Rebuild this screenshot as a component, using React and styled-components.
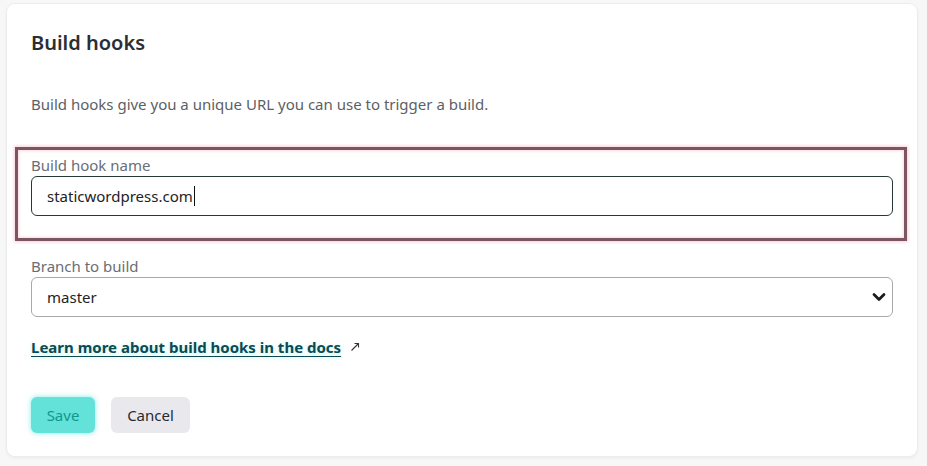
import React from "react";
import styled, { createGlobalStyle } from "styled-components";

const Global = createGlobalStyle`
  html, body { margin: 0; padding: 0; background: #f7f7f7; }
  body { font-family: "Noto Sans", "Open Sans", Arial, sans-serif; color: #2d3035; }
  * { box-sizing: border-box; }
`;

const Page = styled.div`
  padding: 4px 10px 10px 7px;
  width: 927px;
`;

const Card = styled.section`
  width: 910px;
  height: 452px;
  background: #fff;
  border-radius: 8px;
  box-shadow: 0 0 0 1px #ececec, 0 2px 4px rgba(0,0,0,0.06);
  padding: 25px 24px 24px 24px;
  display: flex;
  flex-direction: column;
`;

const Title = styled.h2`
  margin: 0;
  font-size: 20px;
  line-height: 28px;
  font-weight: 600;
  color: #2b2e33;
`;

const Description = styled.p`
  margin: 37px 0 33px;
  font-size: 15px;
  line-height: 20px;
  color: #5b5f66;
`;

const Highlight = styled.div`
  margin: 0 -14px 0 -16px;
  border: 3px solid #7d5561;
  box-shadow: 0 0 3px 1px rgba(240, 170, 190, 0.55), inset 0 0 3px 1px rgba(240, 170, 190, 0.45);
  padding: 5px 11px 22px 13px;
`;

const Field = styled.div`
  display: flex;
  flex-direction: column;
`;

const Label = styled.label`
  font-size: 15px;
  line-height: 20px;
  color: #6a6e74;
  margin-bottom: 1px;
`;

const InputBox = styled.div`
  height: 40px;
  border: 1px solid ${(p) => (p.$focused ? "#283835" : "#a9a9a9")};
  border-radius: 6px;
  display: flex;
  align-items: center;
  padding: 0 15px;
  font-size: 15px;
  color: #1e2226;
  position: relative;
  background: #fff;
`;

const Caret = styled.span`
  display: inline-block;
  width: 1px;
  height: 20px;
  background: #111;
  margin-left: 1px;
`;

const Chevron = styled.svg`
  position: absolute;
  right: 6px;
  top: 50%;
  transform: translateY(-50%);
`;

const BranchField = styled(Field)`
  margin-top: 15px;
`;

const LinkRow = styled.div`
  margin-top: 20px;
  display: flex;
  align-items: center;
  gap: 9px;
  height: 20px;
`;

const DocLink = styled.a`
  font-size: 15px;
  line-height: 20px;
  font-weight: 700;
  color: #0b4a51;
  text-decoration: underline;
  text-underline-offset: 3px;
  text-decoration-thickness: 1px;
  text-shadow: 0 1px 4px rgba(80, 230, 220, 0.35);
`;

const Buttons = styled.div`
  margin-top: 40px;
  display: flex;
  gap: 16px;
`;

const Button = styled.button`
  height: 36px;
  border: none;
  border-radius: 6px;
  font-family: inherit;
  font-size: 15px;
  padding: 0;
  background: ${(p) => (p.$primary ? "#62e2d9" : "#e9e9ed")};
  color: ${(p) => (p.$primary ? "#11978c" : "#26292d")};
  box-shadow: ${(p) => (p.$primary ? "0 0 4px 1px rgba(80, 230, 220, 0.5)" : "none")};
  width: ${(p) => (p.$primary ? "64px" : "79px")};
`;

export default function App() {
  return (
    <Page>
      <Global />
      <Card>
        <Title>Build hooks</Title>
        <Description>Build hooks give you a unique URL you can use to trigger a build.</Description>
        <Highlight>
          <Field>
            <Label>Build hook name</Label>
            <InputBox $focused>
              staticwordpress.com
              <Caret />
            </InputBox>
          </Field>
        </Highlight>
        <BranchField>
          <Label>Branch to build</Label>
          <InputBox>
            master
            <Chevron width="14" height="10" viewBox="0 0 14 10">
              <path d="M2 2.5 L7 7.5 L12 2.5" fill="none" stroke="#1c1c1c" strokeWidth="2.8" strokeLinecap="round" strokeLinejoin="round" />
            </Chevron>
          </InputBox>
        </BranchField>
        <LinkRow>
          <DocLink href="#">Learn more about build hooks in the docs</DocLink>
          <svg width="10" height="10" viewBox="0 0 10 10">
            <path d="M1.5 8.5 L8.5 1.5 M4.5 1.5 H8.5 V5.5" fill="none" stroke="#333" strokeWidth="1.1" />
          </svg>
        </LinkRow>
        <Buttons>
          <Button $primary>Save</Button>
          <Button>Cancel</Button>
        </Buttons>
      </Card>
    </Page>
  );
}
